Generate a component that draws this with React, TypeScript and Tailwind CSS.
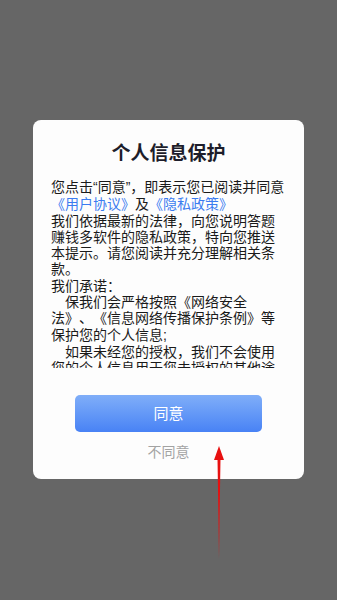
import React from 'react';

const q = (s: string) => <span className="font-['Liberation_Sans',sans-serif]">{s}</span>;

const lines: React.ReactNode[] = [
  <>
    您点击{q('“')}同意{q('”')}，即表示您已阅读并同意
  </>,
  <>
    <span className="text-[#3b7cf0]">《用户协议》</span>及<span className="text-[#3b7cf0]">《隐私政策》</span>
  </>,
  '我们依据最新的法律，向您说明答题',
  '赚钱多软件的隐私政策，特向您推送',
  '本提示。请您阅读并充分理解相关条',
  '款。',
  '我们承诺：',
  '\u3000保我们会严格按照《网络安全',
  '法》、《信息网络传播保护条例》等',
  <>保护您的个人信息{q(';')}</>,
  '\u3000如果未经您的授权，我们不会使用',
  '您的个人信息用于您未授权的其他途',
  '径，我们将严格保护您的隐私安全。',
];

export default function App() {
  return (
    <div className="relative h-[600px] w-full overflow-hidden bg-[#666666] pt-[120px] font-['Noto_Sans_CJK_SC',sans-serif]">
      {/* Dialog */}
      <div className="mx-auto flex w-[271px] flex-col items-center rounded-lg bg-[#fdfdfd] pb-[20px] pt-[18px]">
        <h1 className="h-[28px] text-[19px] font-bold leading-[28px] text-[#1d1d2b]">个人信息保护</h1>
        <div className="mt-[12px] h-[190px] w-full overflow-hidden pl-[18px] pr-[10px] text-[14px] leading-[16.3px] text-[#1a1a1a] [text-spacing-trim:space-all]">
          {lines.map((l, i) => (
            <div key={i} className="whitespace-nowrap">
              {l}
            </div>
          ))}
        </div>
        <button className="mt-[27px] h-[37px] w-[187px] rounded-[5px] bg-gradient-to-b from-[#80aef8] to-[#4882f5] text-[15px] text-white">
          同意
        </button>
        <div className="mt-[11px] h-[16px] text-[14px] leading-[16px] text-[#a3a3a3]">不同意</div>
      </div>

      {/* Red annotation arrow */}
      <svg className="absolute left-[210px] top-[444px]" width="18" height="120" viewBox="0 0 18 120">
        <polygon points="9,2 4,16 14,16" fill="#e81010" />
        <polygon points="7.5,15 10.5,15 9.6,70 9,115 8.4,70" fill="#e81010" />
      </svg>
    </div>
  );
}
